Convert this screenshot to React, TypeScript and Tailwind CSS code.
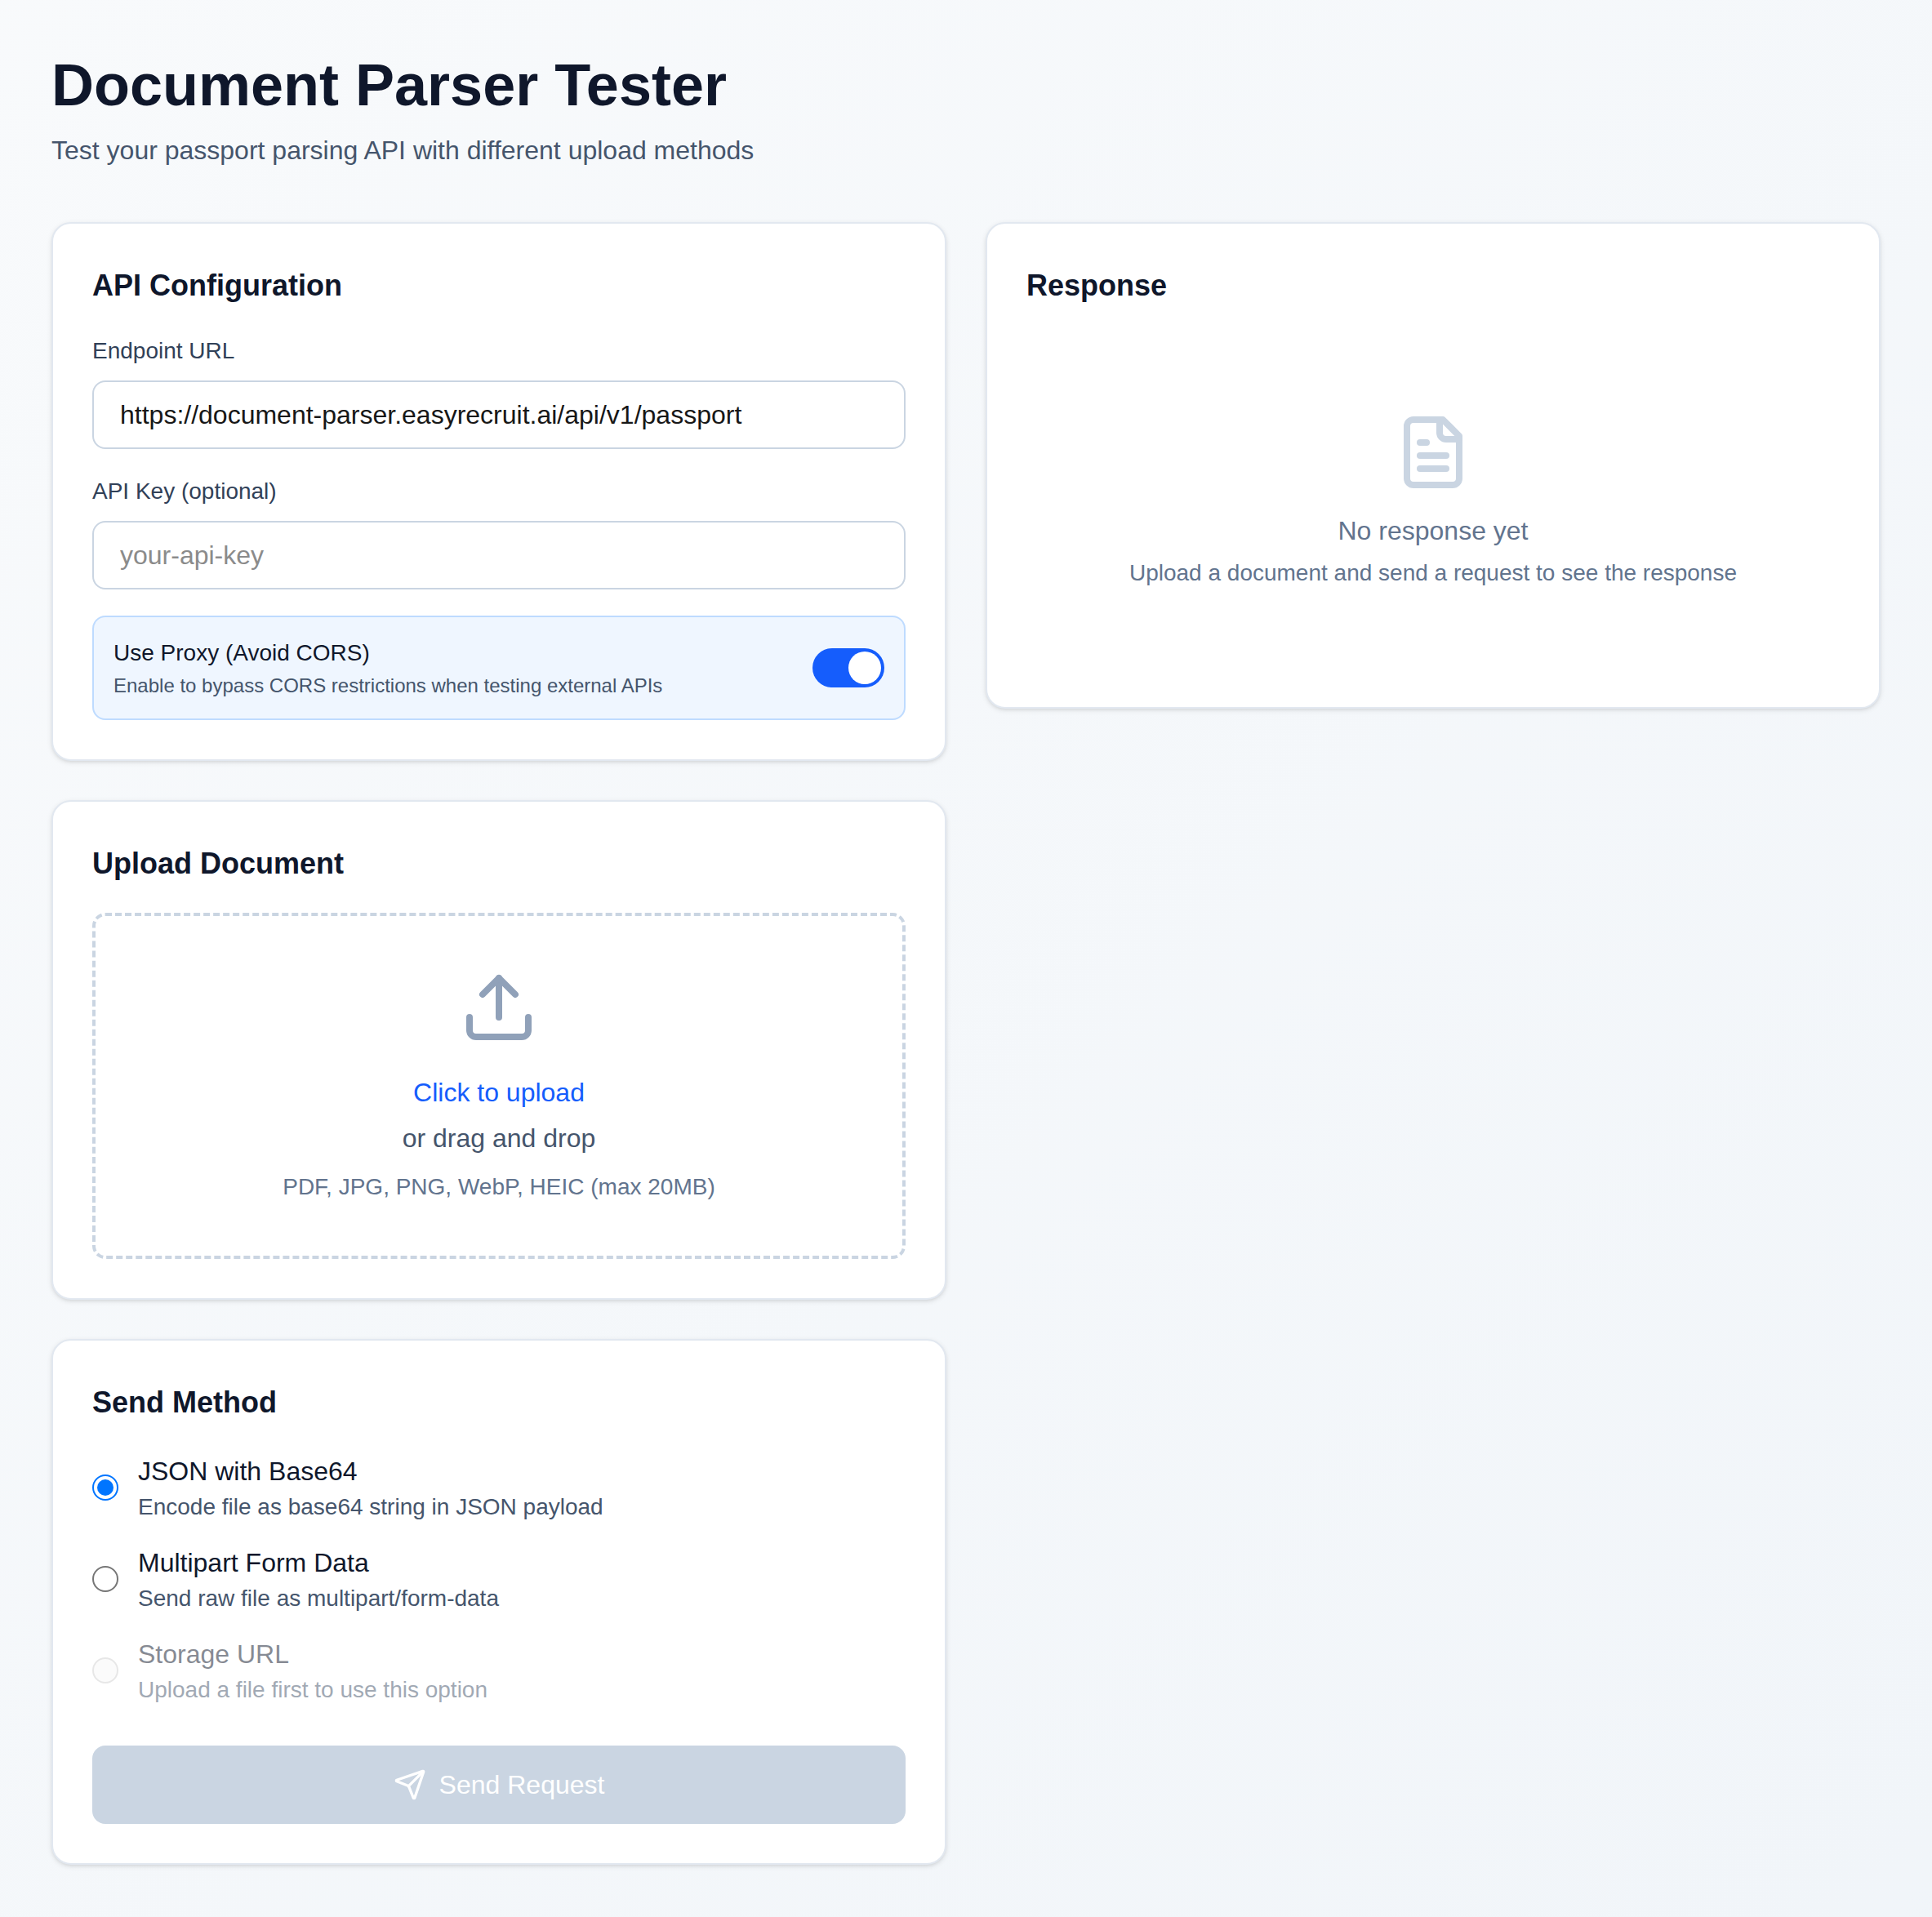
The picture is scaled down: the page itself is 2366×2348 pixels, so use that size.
import { useState, type ReactNode } from "react";
import { Send, Upload } from "lucide-react";

function Card({ title, children }: { title: string; children: ReactNode }) {
  return (
    <section className="rounded-[24px] border-2 border-slate-200 bg-white p-12 shadow-[0_2px_6px_0_rgb(0_0_0/0.1),0_2px_4px_-2px_rgb(0_0_0/0.1)]">
      <h2 className="mb-8 text-[36px] leading-[56px] font-semibold text-slate-900">{title}</h2>
      {children}
    </section>
  );
}

function Field({
  label,
  value,
  placeholder,
  onChange,
}: {
  label: string;
  value: string;
  placeholder?: string;
  onChange: (v: string) => void;
}) {
  return (
    <label className="block">
      <span className="mb-4 block text-[28px] leading-10 text-slate-700">{label}</span>
      <input
        type="text"
        value={value}
        placeholder={placeholder}
        onChange={(e) => onChange(e.target.value)}
        className="block h-[84px] w-full rounded-[16px] border-2 border-slate-300 bg-white px-8 py-4 text-[32px] leading-[48px] text-[#171717] outline-none placeholder:text-[#8b8b8b]"
      />
    </label>
  );
}

function FileTextIcon() {
  return (
    <svg
      viewBox="0 0 24 24"
      fill="none"
      stroke="currentColor"
      strokeWidth="2"
      strokeLinecap="round"
      strokeLinejoin="round"
      className="mb-6 size-24 text-slate-300"
    >
      <path d="M15 2H6a2 2 0 0 0-2 2v16a2 2 0 0 0 2 2h12a2 2 0 0 0 2-2V7Z" />
      <path d="M14 2v4a2 2 0 0 0 2 2h4" />
      <path d="M10 9H8" />
      <path d="M16 13H8" />
      <path d="M16 17H8" />
    </svg>
  );
}

const methods = [
  { id: "base64", title: "JSON with Base64", hint: "Encode file as base64 string in JSON payload", disabled: false },
  { id: "multipart", title: "Multipart Form Data", hint: "Send raw file as multipart/form-data", disabled: false },
  { id: "storage", title: "Storage URL", hint: "Upload a file first to use this option", disabled: true },
];

export default function App() {
  const [endpoint, setEndpoint] = useState("https://document-parser.easyrecruit.ai/api/v1/passport");
  const [apiKey, setApiKey] = useState("");
  const [proxy, setProxy] = useState(true);
  const [method, setMethod] = useState("base64");

  return (
    <div className="min-h-screen bg-gradient-to-br from-slate-50 to-slate-100 px-[63px] py-16 font-['Liberation_Sans',Arial,sans-serif] text-[32px] leading-[48px]">
      <header className="mb-16">
        <h1 className="mb-4 text-[72px] leading-[80px] font-bold text-slate-900">Document Parser Tester</h1>
        <p className="text-slate-600">Test your passport parsing API with different upload methods</p>
      </header>

      <main className="grid grid-cols-2 items-start gap-12">
        <div className="flex flex-col gap-12">
          <Card title="API Configuration">
            <div className="flex flex-col gap-8">
              <Field label="Endpoint URL" value={endpoint} onChange={setEndpoint} />
              <Field label="API Key (optional)" value={apiKey} placeholder="your-api-key" onChange={setApiKey} />
              <div className="flex items-center justify-between rounded-[16px] border-2 border-blue-200 bg-blue-50 p-6">
                <div>
                  <p className="text-[28px] leading-10 text-slate-900">Use Proxy (Avoid CORS)</p>
                  <p className="mt-1 text-[24px] leading-8 text-slate-600">
                    Enable to bypass CORS restrictions when testing external APIs
                  </p>
                </div>
                <button
                  type="button"
                  role="switch"
                  aria-checked={proxy}
                  aria-label="Use Proxy"
                  onClick={() => setProxy(!proxy)}
                  className={
                    proxy
                      ? "flex h-12 w-[88px] justify-end rounded-full bg-blue-600 p-1"
                      : "flex h-12 w-[88px] justify-start rounded-full bg-slate-300 p-1"
                  }
                >
                  <span className="size-10 rounded-full bg-white" />
                </button>
              </div>
            </div>
          </Card>

          <Card title="Upload Document">
            <div className="flex flex-col items-center rounded-[16px] border-4 border-dashed border-slate-300 p-16 text-center">
              <Upload className="mb-8 size-24 text-slate-400" />
              <p className="text-blue-600">Click to upload</p>
              <p className="mt-2 text-slate-600">or drag and drop</p>
              <p className="mt-4 text-[28px] leading-10 text-slate-500">PDF, JPG, PNG, WebP, HEIC (max 20MB)</p>
            </div>
          </Card>

          <Card title="Send Method">
            <div className="flex flex-col gap-6">
              {methods.map((m) => (
                <label key={m.id} className={m.disabled ? "flex items-center gap-6 opacity-50" : "flex items-center gap-6"}>
                  <input
                    type="radio"
                    name="method"
                    checked={method === m.id}
                    disabled={m.disabled}
                    onChange={() => setMethod(m.id)}
                    className="grid size-8 appearance-none place-items-center rounded-full border-2 border-[#767676] bg-white before:size-5 before:rounded-full checked:border-[#0075ff] checked:before:bg-[#0075ff] disabled:border-[#d1d1d1] disabled:bg-[#f9f9f9]"
                  />
                  <span>
                    <span className="block text-slate-900">{m.title}</span>
                    <span className="block text-[28px] leading-10 text-slate-600">{m.hint}</span>
                  </span>
                </label>
              ))}
            </div>
            <button
              type="button"
              disabled
              className="mt-12 flex h-24 w-full items-center justify-center gap-4 rounded-[16px] bg-slate-300 text-white"
            >
              <Send className="size-10" />
              Send Request
            </button>
          </Card>
        </div>

        <Card title="Response">
          <div className="flex flex-col items-center py-24 text-center text-slate-500">
            <FileTextIcon />
            <p>No response yet</p>
            <p className="mt-2 text-[28px] leading-10">Upload a document and send a request to see the response</p>
          </div>
        </Card>
      </main>
    </div>
  );
}
